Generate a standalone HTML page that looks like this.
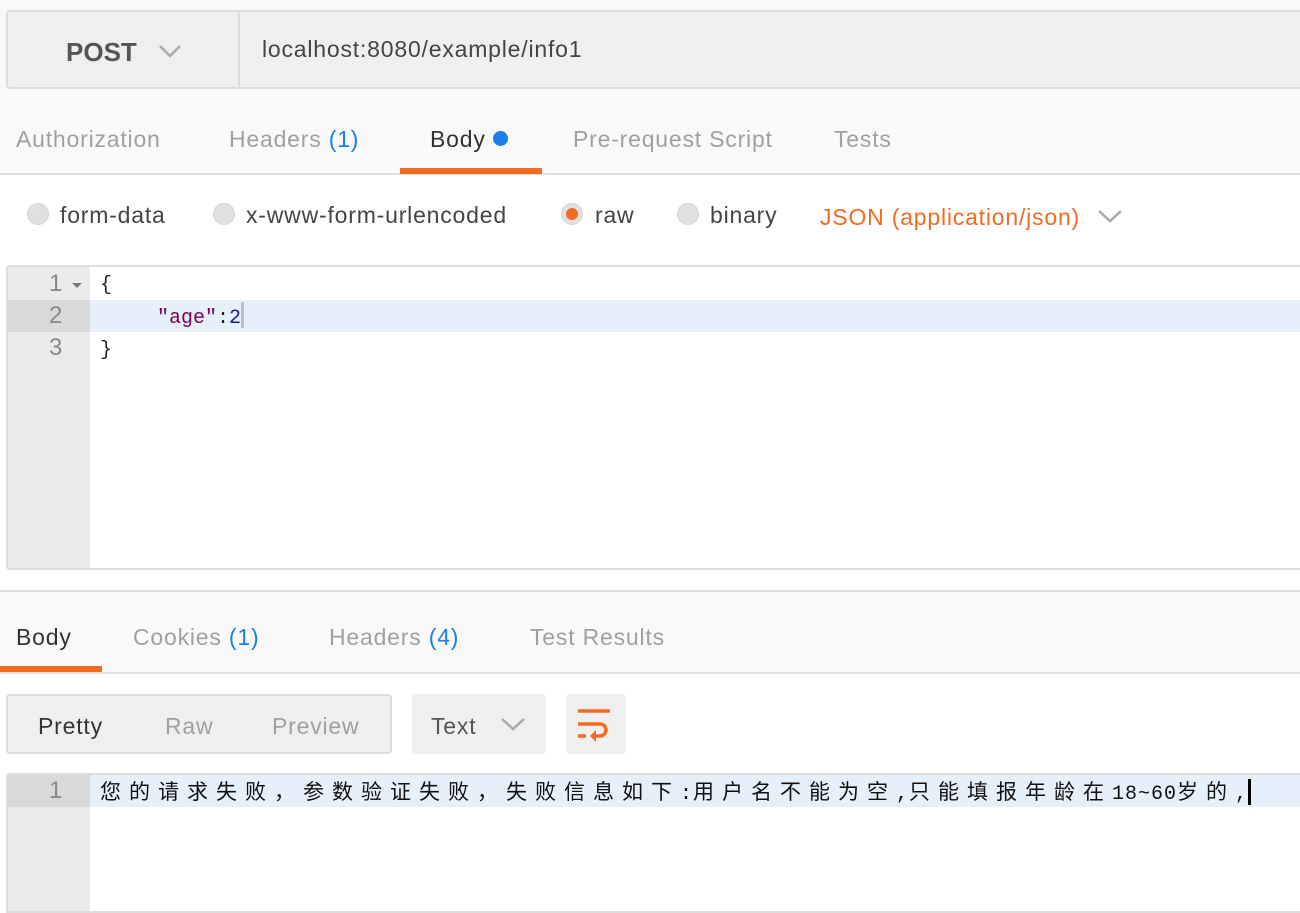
<!DOCTYPE html>
<html><head><meta charset="utf-8"><style>
*{margin:0;padding:0;box-sizing:border-box}
body{width:1300px;height:898px;overflow:hidden;background:#fff;position:relative;font-family:"Liberation Sans","Noto Sans CJK SC",sans-serif;}
.a{position:absolute;white-space:nowrap}
.t{font-size:23px;letter-spacing:0.8px;color:#a0a0a0;line-height:1}
.s{font-size:23px;letter-spacing:0.8px}
.blue{color:#1a7ee8}
.radio{position:absolute;width:22px;height:22px;border-radius:50%;background:#e0e0e0;border:1px solid #d4d4d4}
.mono{font-family:"Liberation Mono","DejaVu Sans Mono",monospace}
.cn{font-family:"Noto Sans CJK SC",sans-serif;font-size:21px;letter-spacing:8px}
.as{font-family:"Liberation Mono",monospace;font-size:20px;letter-spacing:1px}
</style></head><body>
<div class="a" style="left:0;top:0;width:1300px;height:175px;background:#f9f9f9;border-bottom:2px solid #e0e0e0"></div>
<div class="a" style="left:6px;top:10px;width:1300px;height:79px;background:#efefef;border:2px solid #dcdcdc;border-radius:4px 0 0 4px"></div>
<div class="a" style="left:238px;top:12px;width:2px;height:75px;background:#dcdcdc"></div>
<div class="a" style="left:66px;top:37px;font-size:26px;font-weight:bold;color:#555">POST</div>
<svg class="a" style="left:158px;top:43px" width="24" height="16"><path d="M2 3 L12 13 L22 3" stroke="#aaa" stroke-width="2.5" fill="none"/></svg>
<div class="a s" style="left:262px;top:36px;color:#444">localhost:8080/example/info1</div>
<div class="a t" style="left:16px;top:128px">Authorization</div>
<div class="a t" style="left:229px;top:128px">Headers <span class="blue">(1)</span></div>
<div class="a t" style="left:430px;top:128px;color:#333">Body <span style="display:inline-block;width:15px;height:15px;border-radius:50%;background:#1a7ee8;vertical-align:1px"></span></div>
<div class="a" style="left:400px;top:168px;width:142px;height:6px;background:#f26b21"></div>
<div class="a t" style="left:573px;top:128px">Pre-request Script</div>
<div class="a t" style="left:834px;top:128px">Tests</div>
<div class="radio" style="left:27px;top:203px"></div>
<div class="a s" style="left:60px;top:202px;color:#444">form-data</div>
<div class="radio" style="left:213px;top:203px"></div>
<div class="a s" style="left:246px;top:202px;color:#444">x-www-form-urlencoded</div>
<div class="radio" style="left:561px;top:203px"></div>
<div class="a" style="left:566px;top:208px;width:12px;height:12px;border-radius:50%;background:#f26b21"></div>
<div class="a s" style="left:595px;top:202px;color:#444">raw</div>
<div class="radio" style="left:677px;top:203px"></div>
<div class="a s" style="left:710px;top:202px;color:#444">binary</div>
<div class="a s" style="left:820px;top:204px;color:#f26b21">JSON (application/json)</div>
<svg class="a" style="left:1097px;top:208px" width="26" height="16"><path d="M2 3 L13 13 L24 3" stroke="#aaa" stroke-width="2.5" fill="none"/></svg>
<div class="a" style="left:6px;top:265px;width:1300px;height:305px;border:2px solid #dcdcdc;border-radius:4px 0 0 4px;background:#fff;overflow:hidden">
 <div style="position:absolute;left:0;top:0;width:82px;height:305px;background:#ebebeb"></div>
 <div style="position:absolute;left:0;top:33px;width:82px;height:32px;background:#d9d9d9"></div>
 <div style="position:absolute;left:82px;top:33px;width:1220px;height:32px;background:#e6f0fb"></div>
</div>
<div class="a" style="left:49px;top:268px;font-size:24px;color:#888;line-height:32px">1<br>2<br>3</div>
<svg class="a" style="left:72px;top:282px" width="10" height="8"><path d="M0 1 L10 1 L5 6Z" fill="#777"/></svg>
<div class="a mono" style="left:100px;top:270px;font-size:20px;color:#222;line-height:32px">{<br><span style="display:inline-block;width:57px"></span><span style="color:#800055">"age"</span>:<span style="color:#1a1aa6">2</span><span style="display:inline-block;width:3px;height:26px;background:#b8c4d4;vertical-align:-5px"></span><br>}</div>
<div class="a" style="left:0;top:590px;width:1300px;height:84px;background:#f9f9f9;border-top:2px solid #dcdcdc;border-bottom:2px solid #e0e0e0"></div>
<div class="a t" style="left:16px;top:626px;color:#333">Body</div>
<div class="a" style="left:0;top:666px;width:102px;height:6px;background:#f26b21"></div>
<div class="a t" style="left:133px;top:626px">Cookies <span class="blue">(1)</span></div>
<div class="a t" style="left:329px;top:626px">Headers <span class="blue">(4)</span></div>
<div class="a t" style="left:530px;top:626px">Test Results</div>
<div class="a" style="left:6px;top:694px;width:386px;height:60px;background:#efefef;border:2px solid #dcdcdc;border-radius:4px"></div>
<div class="a s" style="left:38px;top:713px;color:#333">Pretty</div>
<div class="a s" style="left:165px;top:713px;color:#a0a0a0">Raw</div>
<div class="a s" style="left:272px;top:713px;color:#a0a0a0">Preview</div>
<div class="a" style="left:412px;top:694px;width:134px;height:60px;background:#efefef;border-radius:4px"></div>
<div class="a s" style="left:431px;top:713px;color:#555">Text</div>
<svg class="a" style="left:500px;top:716px" width="26" height="16"><path d="M2 3 L13 13 L24 3" stroke="#aaa" stroke-width="2.5" fill="none"/></svg>
<div class="a" style="left:566px;top:694px;width:60px;height:60px;background:#efefef;border-radius:4px"></div>
<svg class="a" style="left:576px;top:708px" width="40" height="34"><g stroke="#f26b21" stroke-width="3.5" fill="none"><path d="M2 3 H34"/><path d="M2 16 H24 A6 6 0 0 1 24 28 H16"/><path d="M2 28 H10"/></g><path d="M14 28 L20 22 L20 34Z" fill="#f26b21"/></svg>
<div class="a" style="left:6px;top:773px;width:1300px;height:140px;border:2px solid #dcdcdc;border-radius:4px 0 0 0;background:#fff;overflow:hidden">
 <div style="position:absolute;left:0;top:0;width:82px;height:140px;background:#ebebeb"></div>
 <div style="position:absolute;left:0;top:0;width:82px;height:32px;background:#d9d9d9"></div>
 <div style="position:absolute;left:82px;top:0;width:1220px;height:32px;background:#e6f0fb"></div>
</div>
<div class="a" style="left:49px;top:775px;font-size:24px;color:#888;line-height:32px">1</div>
<div class="a" style="left:100px;top:776px;line-height:30px;color:#111"><span class="cn">您的请求失败，参数验证失败，失败信息如下</span><span class="as">:</span><span class="cn">用户名不能为空</span><span class="as">,</span><span class="cn">只能填报年龄在</span><span class="as">18~60</span><span class="cn">岁的</span><span class="as">,</span><span style="display:inline-block;width:3px;height:26px;background:#000;vertical-align:-6px"></span></div>
</body></html>
